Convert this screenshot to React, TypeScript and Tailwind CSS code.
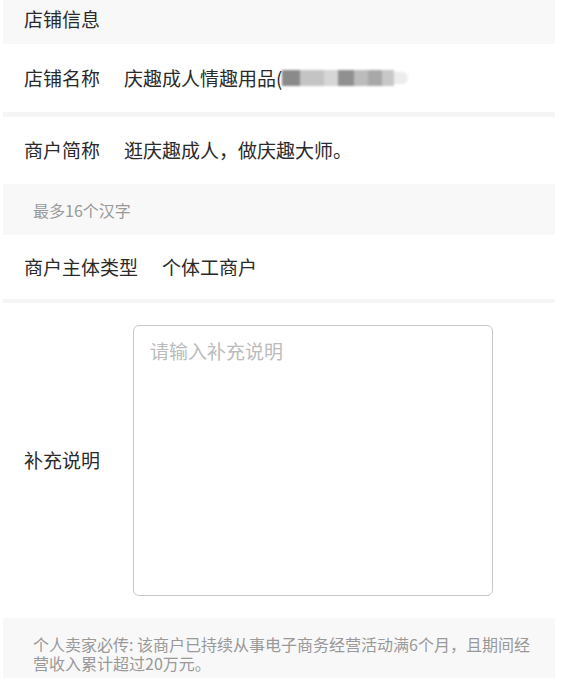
import React from 'react';

const font = { fontFamily: '"Noto Sans CJK SC", "Noto Sans", sans-serif' };

const Row: React.FC<{ label: string; h: string; children: React.ReactNode }> = ({ label, h, children }) => (
  <div className={`flex items-center bg-white pl-[21px] text-[19px] text-[#2a2a2a] ${h}`}>
    <span className="mr-[24px] whitespace-nowrap">{label}</span>
    {children}
  </div>
);

const App: React.FC = () => {
  return (
    <div className="min-h-[678px] bg-white" style={font}>
      <div className="ml-[3px] w-[552px]">
        {/* section title */}
        <div className="h-[44px] bg-[#f8f8f8] pl-[21px] pt-[7px] text-[19px] leading-[24px] text-[#2a2a2a]">
          店铺信息
        </div>

        <Row label="店铺名称" h="h-[68px]">
          <span className="whitespace-nowrap">庆趣成人情趣用品(</span>
          {/* blurred part of the name */}
          <div className="flex h-[18px] items-center blur-[1px]">
            <div className="h-[16px] w-[18px] bg-[#8a8a8a]" />
            <div className="h-[16px] w-[24px] bg-[#c4c4c4]" />
            <div className="h-[16px] w-[14px] bg-[#d6d6d6]" />
            <div className="h-[16px] w-[16px] bg-[#909090]" />
            <div className="h-[16px] w-[14px] bg-[#bcbcbc]" />
            <div className="h-[16px] w-[14px] bg-[#a8a8a8]" />
            <div className="h-[16px] w-[12px] bg-[#c8c8c8]" />
            <div className="h-[12px] w-[14px] rounded-r-full bg-[#ececec]" />
          </div>
        </Row>

        <div className="h-[5px] bg-[#f5f5f5]" />

        <Row label="商户简称" h="h-[67px]">
          <span className="whitespace-nowrap">逛庆趣成人，做庆趣大师。</span>
        </Row>

        <div className="flex h-[51px] items-center bg-[#f8f8f8] pl-[30px] text-[16px] text-[#999]">
          最多16个汉字
        </div>

        <Row label="商户主体类型" h="h-[64px]">
          <span className="whitespace-nowrap">个体工商户</span>
        </Row>

        <div className="h-[4px] bg-[#f5f5f5]" />

        <div className="flex h-[315px] items-center bg-white pl-[21px] text-[19px] text-[#2a2a2a]">
          <span className="mr-[33px] whitespace-nowrap">补充说明</span>
          <textarea
            className="h-[271px] w-[360px] resize-none rounded-[6px] border border-[#c8c8c8] px-[16px] py-[12px] text-[19px] leading-[26px] text-[#222] outline-none placeholder:text-[#bbb]"
            placeholder="请输入补充说明"
            style={font}
          />
        </div>

        <div className="bg-[#f8f8f8] pb-[12px] pl-[30px] pr-[16px] pt-[17px] text-[16px] leading-[19px] text-[#999]">
          个人卖家必传: 该商户已持续从事电子商务经营活动满6个月，且期间经营收入累计超过20万元。
        </div>
      </div>
    </div>
  );
};

export default App;
